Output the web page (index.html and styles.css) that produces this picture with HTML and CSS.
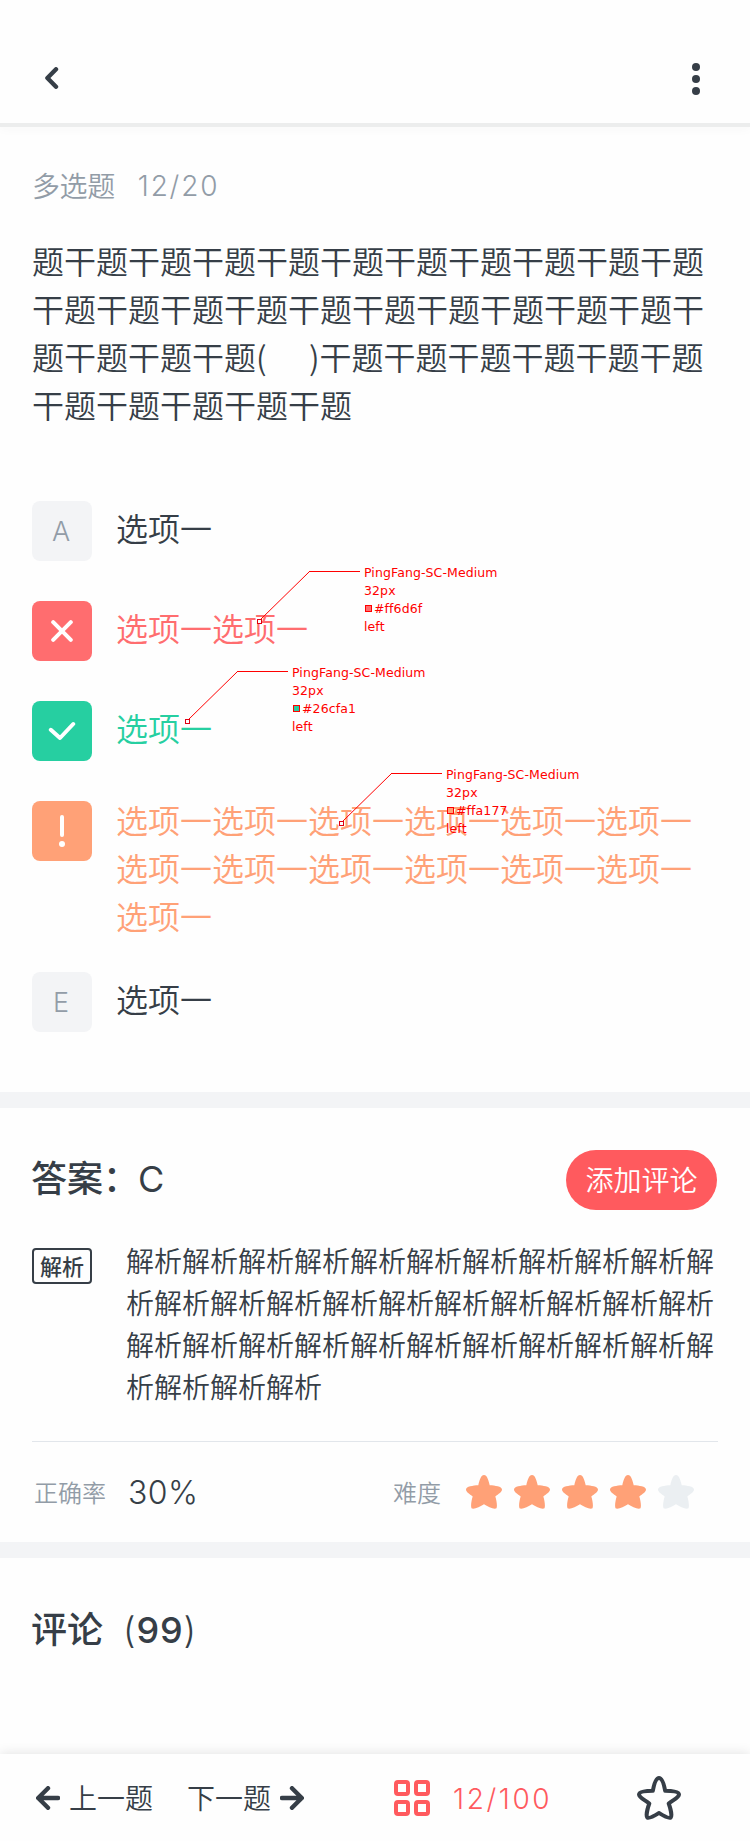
FILE: index.html
```html
<!DOCTYPE html>
<html lang="zh-CN">
<head>
<meta charset="utf-8">
<title>多选题</title>
<link rel="stylesheet" href="styles.css">
</head>
<body>
<svg class="defs" width="0" height="0">
  <symbol id="star" viewBox="0 0 36 34"><path d="M18 0C21 0 22.5 5 23.7 10.3C29 10.5 36 11.5 36 14.5C36 17 32.5 19 29.3 21.5C30.5 25 31.5 31 30.5 33.2C28.5 34.8 22 32 18 29.3C14 32 7.5 34.8 5.5 33.2C4.5 31 5.5 25 6.7 21.5C3.5 19 0 17 0 14.5C0 11.5 7 10.5 12.3 10.3C13.5 5 15 0 18 0Z"/></symbol>
</svg>
<div class="page">
  <header class="topbar">
    <svg class="back" width="14" height="22" viewBox="0 0 14 22"><path d="M11 2.3L2.4 11L11 19.7"/></svg>
    <svg class="more" width="8" height="32" viewBox="0 0 8 32"><circle cx="4" cy="4" r="4"/><circle cx="4" cy="16" r="4"/><circle cx="4" cy="28" r="4"/></svg>
  </header>

  <main class="question">
    <div class="meta"><span>多选题</span><span class="count">12/20</span></div>
    <p class="stem">题干题干题干题干题干题干题干题干题干题干题干题干题干题干题干题干题干题干题干题干题干题干题干题干题(<span class="gap"></span>)干题干题干题干题干题干题干题干题干题干题干题</p>
    <ul class="options">
      <li class="option"><span class="badge">A</span><span class="label">选项一</span></li>
      <li class="option wrong"><span class="badge"><svg width="22" height="22" viewBox="0 0 22 22"><path d="M2.2 2.2L19.8 19.8M19.8 2.2L2.2 19.8"/></svg></span><span class="label">选项一选项一</span></li>
      <li class="option right"><span class="badge"><svg width="28" height="20" viewBox="0 0 28 20"><path d="M2.8 8.8L12 17L25.2 3"/></svg></span><span class="label">选项一</span></li>
      <li class="option missed"><span class="badge"><svg width="6" height="32" viewBox="0 0 6 32"><path d="M3 2V20"/><circle cx="3" cy="29" r="3"/></svg></span><span class="label">选项一选项一选项一选项一选项一选项一选项一选项一选项一选项一选项一选项一选项一</span></li>
      <li class="option"><span class="badge">E</span><span class="label">选项一</span></li>
    </ul>
  </main>

  <section class="answer">
    <div class="answer-head">
      <h2 class="title">答案：<span class="letter">C</span></h2>
      <button class="comment-btn">添加评论</button>
    </div>
    <div class="analysis">
      <span class="tag">解析</span>
      <p class="analysis-text">解析解析解析解析解析解析解析解析解析解析解析解析解析解析解析解析解析解析解析解析解析解析解析解析解析解析解析解析解析解析解析解析解析解析解析</p>
    </div>
    <div class="stats">
      <span class="stat-name">正确率</span><span class="rate">30%</span>
      <span class="stat-name level">难度</span>
      <span class="stars">
        <svg width="36" height="34"><use href="#star"/></svg>
        <svg width="36" height="34"><use href="#star"/></svg>
        <svg width="36" height="34"><use href="#star"/></svg>
        <svg width="36" height="34"><use href="#star"/></svg>
        <svg class="off" width="36" height="34"><use href="#star"/></svg>
      </span>
    </div>
  </section>

  <section class="comments">
    <h2 class="title">评论<span class="total"><span class="paren">(</span>99<span class="paren">)</span></span></h2>
  </section>

  <footer class="bottombar">
    <span class="nav"><svg width="24" height="24" viewBox="0 0 24 24"><path d="M12 2.2L2.2 12L12 21.8M2.4 12H22"/></svg><span class="nav-text">上一题</span></span>
    <span class="nav next"><span class="nav-text">下一题</span><svg width="24" height="24" viewBox="0 0 24 24"><path d="M12 2.2L21.8 12L12 21.8M21.6 12H2"/></svg></span>
    <span class="progress"><svg width="36" height="36" viewBox="0 0 36 36"><rect x="2" y="2" width="12" height="12" rx="2"/><rect x="22" y="2" width="12" height="12" rx="2"/><rect x="2" y="22" width="12" height="12" rx="2"/><rect x="22" y="22" width="12" height="12" rx="2"/></svg><span class="ratio">12/100</span></span>
    <svg class="fav" width="44" height="44" viewBox="0 0 44 44"><path d="M22 2C25 2 27 8.500 28.200 14.800C34.500 15 42 15.500 42 18.500C42 21.500 36 24 31.700 27.500C33 31 35.300 39.500 33.700 41.500C31.500 43 26 39.500 22 37C18 39.500 12.500 43 10.300 41.500C8.700 39.500 11 31 12.300 27.500C8 24 2 21.500 2 18.500C2 15.500 9.500 15 15.800 14.800C17 8.500 19 2 22 2Z"/></svg>
  </footer>

  <div class="note note-wrong">
    <svg width="104" height="56" viewBox="0 0 104 56"><path class="lead" d="M3 49L52.500 .5"/><path class="flat" d="M52 .5H103"/><rect x=".5" y="48.500" width="4" height="4"/></svg>
    <div class="note-text"><span>PingFang-SC-Medium</span><span>32px</span><span><i></i>#ff6d6f</span><span>left</span></div>
  </div>
  <div class="note note-right">
    <svg width="104" height="56" viewBox="0 0 104 56"><path class="lead" d="M3 49L52.500 .5"/><path class="flat" d="M52 .5H103"/><rect x=".5" y="48.500" width="4" height="4"/></svg>
    <div class="note-text"><span>PingFang-SC-Medium</span><span>32px</span><span><i></i>#26cfa1</span><span>left</span></div>
  </div>
  <div class="note note-missed">
    <svg width="104" height="56" viewBox="0 0 104 56"><path class="lead" d="M3 49L52.500 .5"/><path class="flat" d="M52 .5H103"/><rect x=".5" y="48.500" width="4" height="4"/></svg>
    <div class="note-text"><span>PingFang-SC-Medium</span><span>32px</span><span><i></i>#ffa177</span><span>left</span></div>
  </div>
</div>
</body>
</html>
```
FILE: styles.css
```css
* { box-sizing: border-box; margin: 0; padding: 0; }
body {
  background: #fefefe;
  color: #363e47;
  font-family: "Noto Sans CJK SC", sans-serif;
  font-weight: 350;
}
svg { display: block; flex: none; }
.defs { position: absolute; }
.page {
  position: relative;
  display: flex;
  flex-direction: column;
  width: 750px;
  height: 1841px;
  overflow: hidden;
}

.topbar {
  display: flex;
  justify-content: space-between;
  height: 123px;
  padding: 63px 50px 0 45px;
  box-shadow: 0 4px 0 #eceded, 0 6px 10px rgba(54, 62, 71, .03);
}
.back { margin-top: 4px; fill: none; stroke: #363e47; stroke-width: 4.4; stroke-linecap: round; stroke-linejoin: round; }
.more { fill: #363e47; }

.question { height: 969px; padding: 42px 32px 0; }
.meta { display: flex; height: 40px; line-height: 40px; font-size: 28px; color: #929ca7; }
.meta > span:first-child { letter-spacing: -.4px; }
.count, .ratio { font-family: Inter, sans-serif; font-weight: 300; }
.count { margin-left: 23px; padding-top: 1px; letter-spacing: 1.8px; }
.stem { width: 675px; margin-top: 31px; font-size: 32px; line-height: 48px; word-break: break-all; }
.gap { display: inline-block; width: 42.300px; }
.options { margin-top: 73px; list-style: none; }
.option { display: flex; gap: 24px; height: 60px; margin-bottom: 40px; }
.badge {
  display: flex;
  align-items: center;
  justify-content: center;
  flex: none;
  width: 60px;
  height: 60px;
  padding-right: 2px;
  border-radius: 8px;
  background: #f3f4f6;
  color: #929ca7;
  font: 350 27px Inter, sans-serif;
}
.badge:has(svg) { padding: 0; }
.badge svg { fill: #fff; stroke: #fff; stroke-width: 4; stroke-linecap: round; stroke-linejoin: round; }
.badge circle { stroke: none; }
.badge path { fill: none; }
.label { padding-top: 2px; font-size: 32px; line-height: 48px; word-break: break-all; }
.wrong { color: #ff6d6f; }
.wrong .badge { background: #ff6d6f; }
.right { color: #26cfa1; }
.right .badge { background: #26cfa1; }
.missed { height: 131px; color: #ffa177; }
.missed .badge { background: #ffa177; }
.missed .label { width: 578px; padding: 0; margin-top: -6px; }

.answer { height: 450px; padding: 42px 32px 0; border-top: 16px solid #f3f4f6; }
.answer-head, .analysis, .stats { display: flex; }
.answer-head { justify-content: space-between; padding-right: 1px; height: 76px; }
.title { height: 54px; margin: -1px 0 0 -1px; font-size: 36px; line-height: 54px; font-weight: 500; }
.letter { font-family: Inter, sans-serif; font-weight: 420; line-height: 1; margin-left: -1px; }
.comment-btn {
  width: 151px;
  height: 60px;
  padding-bottom: 2px;
  border: 0;
  border-radius: 30px;
  background: #ff5a5e;
  color: #fff;
  font: 350 28px/58px "Noto Sans CJK SC", sans-serif;
}
.analysis { margin-top: 22px; }
.tag {
  flex: none;
  width: 60px;
  height: 36px;
  border: 2px solid #363e47;
  border-radius: 4px;
  text-align: center;
  font-size: 22px;
  font-weight: 500;
  line-height: 30px;
}
.analysis-text { width: 590px; margin: -9px 0 0 34px; font-size: 28px; line-height: 42px; word-break: break-all; }
.stats { align-items: center; width: 686px; height: 101px; margin-top: 34px; border-top: 1px solid #e2e6eb; }
.stat-name { margin-left: 2px; font-size: 24px; line-height: 36px; color: #929ca7; }
.rate { margin-left: 22px; padding-top: 1px; font: 300 32px/40px Inter, sans-serif; letter-spacing: .4px; }
.level { margin-left: auto; }
.stars { display: flex; gap: 12px; margin: 0 24px 0 25px; fill: #ffa177; }
.off { fill: #ebeff2; }

.comments { height: 212px; padding: 43px 32px 0; border-top: 16px solid #f3f4f6; }
.total { margin-left: 20px; font-family: Inter, sans-serif; font-weight: 450; line-height: 1; letter-spacing: .9px; }
.paren { font-weight: 350; }

.bottombar {
  display: flex;
  align-items: center;
  height: 87px;
  padding-left: 36px;
  background: #fefefe;
  box-shadow: 0 0 12px rgba(0, 0, 0, .12);
  font-size: 28px;
}
.nav { display: flex; align-items: center; gap: 9px; }
.nav svg { fill: none; stroke: #363e47; stroke-width: 4.4; stroke-linecap: round; stroke-linejoin: round; }
.nav-text { padding-bottom: 2px; }
.next { margin-left: 34px; }
.progress { display: flex; align-items: center; margin-left: 90px; color: #ff5a5e; }
.progress svg { fill: none; stroke: #ff5a5e; stroke-width: 4; }
.ratio { width: 100px; margin: 3px 0 0 23px; letter-spacing: 2.600px; }
.fav { margin-left: 84px; fill: none; stroke: #363e47; stroke-width: 4; stroke-linejoin: round; }

/* Design annotations laid over the option list */
.note { position: absolute; display: flex; gap: 3px; color: #f00; font: 12.500px/18px "DejaVu Sans", sans-serif; letter-spacing: .1px; }
.note svg { fill: #fff; stroke: #f00; }
.lead, .flat { fill: none; }
.note rect { stroke: #e00012; }
.note-text { display: flex; flex-direction: column; margin-top: -7px; white-space: nowrap; }
.note-text i { display: inline-block; width: 7px; height: 7px; margin: 0 2px 1px 1px; border: 1px solid #f00; }
.note-wrong { left: 257px; top: 571px; }
.note-wrong i { background: #ff6d6f; }
.note-right { left: 185px; top: 671px; }
.note-right i { background: #26cfa1; }
.note-missed { left: 339px; top: 773px; }
.note-missed i { background: #ffa177; }
```
